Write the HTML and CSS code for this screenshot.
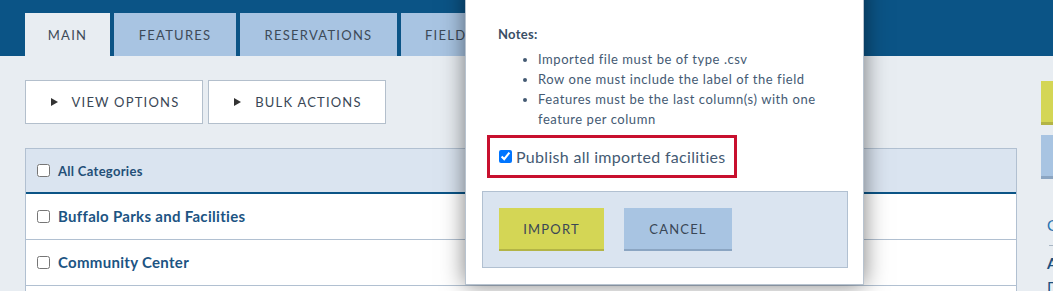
FILE: index.html
```html
<!DOCTYPE html>
<html lang="en">
<head>
<meta charset="utf-8">
<title>Facilities</title>
<link rel="stylesheet" href="styles.css">
</head>
<body>
<div class="page">
  <header class="topbar">
    <nav class="tabs">
      <div class="tab active tab-main">MAIN</div>
      <div class="tab tab-features">FEATURES</div>
      <div class="tab tab-res">RESERVATIONS</div>
      <div class="tab">FIELDS</div>
      <div class="tab">SETTINGS</div>
    </nav>
  </header>
  <div class="content">
    <main class="main">
      <div class="toolbar">
        <button class="tool-btn"><span class="tri"></span>VIEW OPTIONS</button>
        <button class="tool-btn"><span class="tri"></span>BULK ACTIONS</button>
      </div>
      <div class="table">
        <div class="row head"><input type="checkbox"><span>All Categories</span></div>
        <div class="row"><input type="checkbox"><span>Buffalo Parks and Facilities</span></div>
        <div class="row"><input type="checkbox"><span>Community Center</span></div>
        <div class="row"><input type="checkbox"><span>Parks</span></div>
      </div>
    </main>
    <aside class="side">
      <div class="side-btn yellow">ADD</div>
      <div class="side-btn blue">IMPORT</div>
      <div class="side-link">Categories</div>
      <div class="side-rule"></div>
      <div class="side-title">All</div>
      <div class="side-box">Default</div>
    </aside>
  </div>

  <div class="modal">
    <div class="notes">
      <div class="notes-title">Notes:</div>
      <ul class="notes-list">
        <li>Imported file must be of type .csv</li>
        <li>Row one must include the label of the field</li>
        <li>Features must be the last column(s) with one feature per column</li>
      </ul>
    </div>
    <label class="publish"><input type="checkbox" checked><span>Publish all imported facilities</span></label>
    <div class="modal-foot">
      <button class="m-btn import">IMPORT</button>
      <button class="m-btn cancel">CANCEL</button>
    </div>
  </div>
</div>
</body>
</html>
```

FILE: styles.css
```css
* { box-sizing: border-box; }
html, body { margin: 0; padding: 0; }
body {
  width: 1053px;
  height: 291px;
  overflow: hidden;
  background: #e8edf2;
  font-family: Lato, "Open Sans", sans-serif;
}
.page {
  position: relative;
  width: 1053px;
  height: 291px;
  overflow: hidden;
}
.topbar {
  height: 56px;
  background: #0b5486;
  padding: 13px 0 0 25px;
}
.tabs {
  display: flex;
  gap: 4px;
  height: 43px;
}
.tab {
  flex: none;
  height: 43px;
  padding: 1px 24px 0;
  background: #a8c4e2;
  color: #3d4a58;
  font-size: 13px;
  letter-spacing: 1.25px;
  display: flex;
  align-items: center;
  justify-content: center;
  white-space: nowrap;
}
.tab-main { width: 85px; padding: 1px 0 0; }
.tab-features { width: 122px; padding: 1px 0 0; }
.tab-res { width: 157px; padding: 1px 0 0; }
.tab.active { background: #e8edf2; }

.content {
  display: flex;
  gap: 24px;
  padding: 24px 0 0 25px;
}
.main { width: 992px; flex: none; }
.toolbar { display: flex; gap: 5px; }
.tool-btn {
  width: 178px;
  height: 44px;
  background: #fff;
  border: 1px solid #b3bfcc;
  font-family: Lato, sans-serif;
  font-size: 13px;
  letter-spacing: 1.2px;
  color: #3a4756;
  display: flex;
  align-items: center;
  justify-content: center;
  gap: 14px;
  padding: 0 0 0 2px;
}
.tri {
  width: 0; height: 0;
  border-top: 4px solid transparent;
  border-bottom: 4px solid transparent;
  border-left: 7px solid #333;
}
.table {
  margin-top: 24px;
  border: 1px solid #b1c0d1;
  border-bottom: none;
  background: #fff;
}
.row {
  height: 46px;
  display: flex;
  align-items: center;
  border-bottom: 1px solid #b1c0d1;
  padding-left: 7px;
  padding-bottom: 2px;
  color: #1c5483;
  font-size: 15px;
  font-weight: 700;
  letter-spacing: 0.3px;
}
.row input { margin: 2px 8px 0 4px; width: 13px; height: 13px; }
.row.head {
  height: 45px;
  padding-bottom: 0;
  background: #dae4f0;
  border-bottom: 2px solid #0b5486;
  font-size: 13px;
  color: #234f77;
}
.row.head input { margin-top: 0; }
.side { width: 200px; flex: none; }
.side-btn {
  height: 44px;
  font-size: 13px;
  letter-spacing: 1px;
  padding-left: 30px;
  display: flex; align-items: center;
  color: #333;
}
.side-btn.yellow { background: #d4d655; border-bottom: 3px solid #b3b446; margin-top: 1px; }
.side-btn.blue { background: #a8c4e2; border-bottom: 3px solid #8ba5c2; margin-top: 10px; }
.side-link {
  margin-top: 36px;
  padding-left: 6px;
  color: #2b74b0;
  font-size: 15px;
  line-height: 20px;
}
.side-rule {
  margin: 10px 0 0 8px;
  border-top: 1px solid #a9b6c4;
}
.side-title {
  margin-top: 7px;
  padding-left: 6px;
  color: #1c4f7d;
  font-size: 15px;
  font-weight: 700;
  line-height: 20px;
}
.side-box {
  margin-top: 4px;
  padding-left: 6px;
  color: #1c4f7d;
  font-size: 15px;
  line-height: 20px;
}

.modal {
  position: absolute;
  left: 465px;
  top: -20px;
  width: 399px;
  height: 305px;
  background: #fff;
  border: 1px solid #b8c3cf;
  box-shadow: 0 0 22px rgba(0, 0, 0, 0.5);
  padding: 43px 16px 16px 16px;
  color: #445a73;
}
.notes { padding-left: 16px; }
.notes-title {
  font-size: 13px;
  font-weight: 700;
  line-height: 20px;
  color: #3a4f66;
  letter-spacing: 0.3px;
}
.notes-list {
  margin: 5px 0 0;
  padding: 0 10px 0 40px;
  font-size: 13px;
  line-height: 20px;
  letter-spacing: 0.55px;
}
.notes-list li { padding-left: 0; }
.publish {
  display: flex;
  align-items: center;
  width: 250px;
  height: 43px;
  margin: 6px 0 0 5px;
  border: 3px solid #c8102e;
  padding-left: 8px;
  font-size: 16px;
  letter-spacing: 0.3px;
  color: #445a73;
}
.publish input { margin: 0 4px 0 1px; width: 13px; height: 13px; }
.modal-foot {
  margin-top: 13px;
  width: 366px;
  height: 77px;
  background: #dae4f0;
  border: 1px solid #b1c0d1;
  display: flex;
  align-items: center;
  gap: 20px;
  padding-left: 16px;
}
.m-btn {
  height: 43px;
  border: none;
  font-family: Lato, sans-serif;
  font-size: 13px;
  letter-spacing: 1.2px;
  color: #3a4756;
  padding: 0;
}
.m-btn.import { width: 105px; background: #d4d655; border-bottom: 2px solid #b3b446; }
.m-btn.cancel { width: 108px; background: #a8c4e2; border-bottom: 2px solid #8ba5c2; }
```
